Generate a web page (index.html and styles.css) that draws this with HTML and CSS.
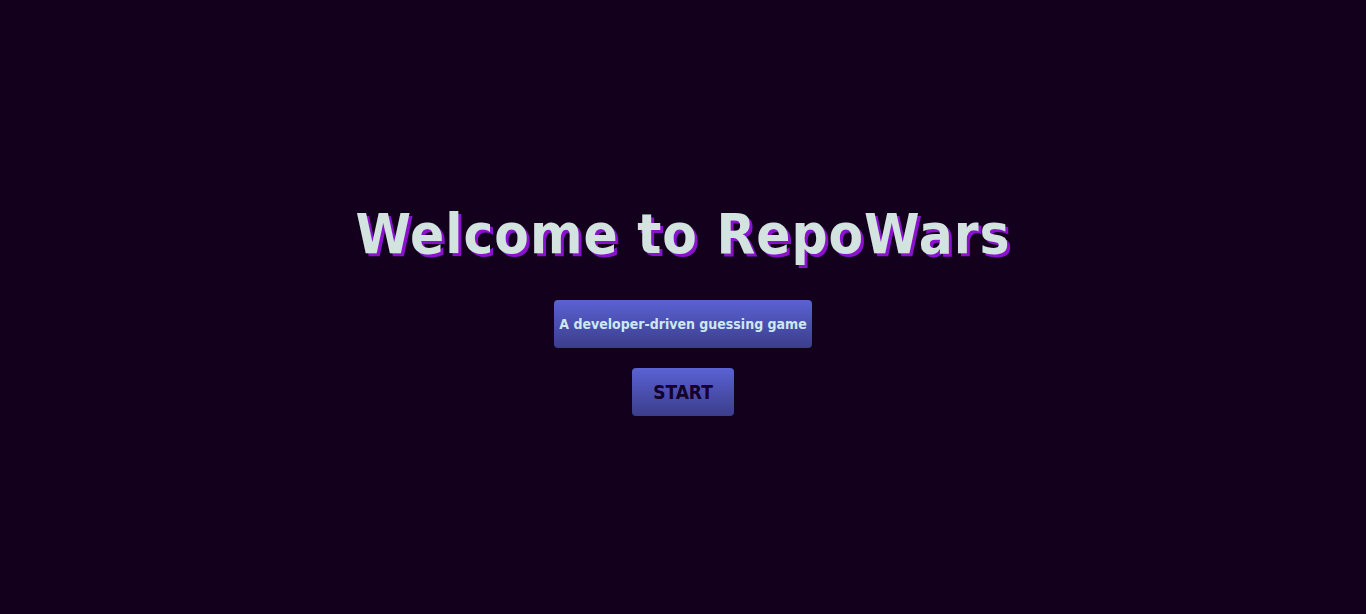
FILE: index.html
```html
<!DOCTYPE html>
<html>
<head>
<meta charset="utf-8">
<link rel="stylesheet" href="styles.css">
</head>
<body>
<main class="welcome">
  <h1 class="title">Welcome to RepoWars</h1>
  <div class="tagline">A developer-driven guessing game</div>
  <button class="start">START</button>
</main>
</body>
</html>
```
FILE: styles.css
```css
html, body {
  margin: 0;
  padding: 0;
  height: 100%;
  background: #12001d;
}
body {
  font-family: "DejaVu Sans Condensed", "DejaVu Sans", sans-serif;
}
.welcome {
  height: 100%;
  display: flex;
  flex-direction: column;
  align-items: center;
  justify-content: center;
}
.title {
  margin: 0 0 30px;
  font-family: "DejaVu Sans Condensed", "DejaVu Sans", sans-serif;
  font-weight: bold;
  font-size: 56px;
  line-height: 72px;
  letter-spacing: 1px;
  color: #d3e3df;
  text-shadow: 3px 3px 0 #8a12cc;
}
.tagline {
  width: 258px;
  height: 48px;
  display: flex;
  align-items: center;
  justify-content: center;
  border-radius: 4px;
  background: linear-gradient(#5a62d4, #3b3d8a);
  color: #cde8ef;
  font-size: 14px;
  font-weight: bold;
}
.start {
  margin-top: 20px;
  width: 102px;
  height: 48px;
  border: none;
  border-radius: 4px;
  background: linear-gradient(#5a62d4, #3b3d8a);
  color: #14002a;
  font-family: "DejaVu Sans Condensed", "DejaVu Sans", sans-serif;
  font-weight: bold;
  font-size: 19px;
  padding: 0;
}
```
